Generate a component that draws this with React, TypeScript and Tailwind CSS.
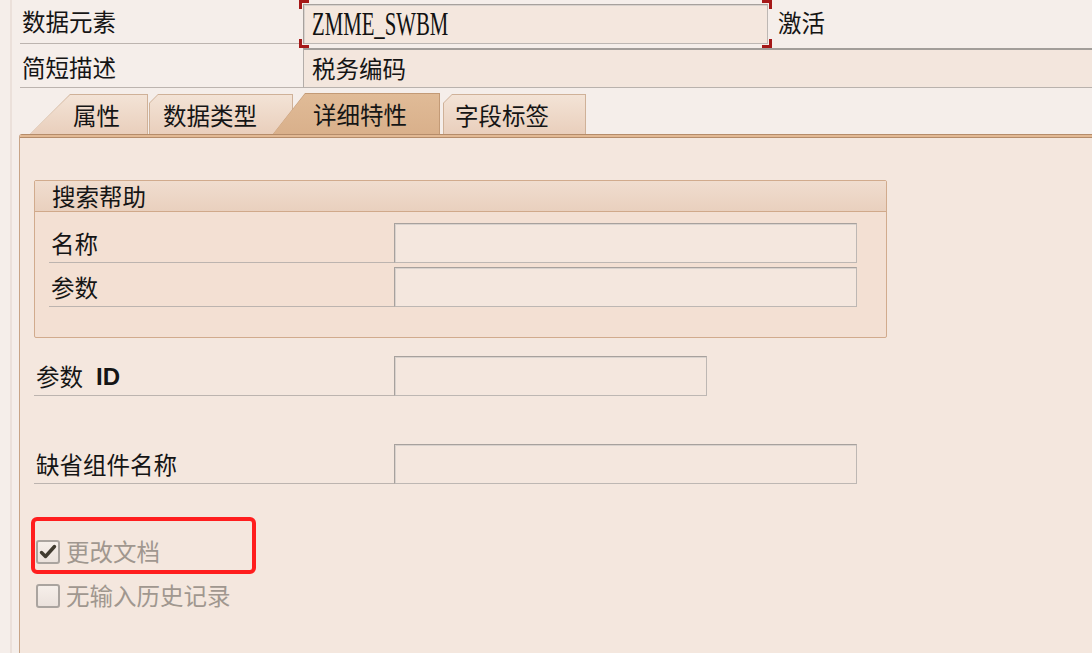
import React from 'react';

const cjk = "font-['Noto_Sans_CJK_SC','Noto_Sans_CJK_SC',sans-serif]";

function Field({ w, text }: { w: string; text?: string }) {
  return (
    <div
      className={`${w} h-[40px] flex items-center pl-[8px] bg-[#f4e7de] border border-[#a7a19d] border-b-[#bdb7b3] border-r-[#bdb7b3] shadow-[inset_1px_1px_0_#d9d2cd]`}
    >
      {text}
    </div>
  );
}

function LabelRow({
  label,
  labelW,
  fieldW,
  bold,
}: {
  label: string;
  labelW: string;
  fieldW: string;
  bold?: string;
}) {
  return (
    <div className="flex items-end h-[40px]">
      <div className={`${labelW} h-[40px] flex items-center border-b border-[#bcb4af] pl-[2px] pt-[2px]`}>
        {label}
        {bold && (
          <span className="ml-[13px] font-['Liberation_Sans',sans-serif] font-bold text-[24px]">{bold}</span>
        )}
      </div>
      <Field w={fieldW} />
    </div>
  );
}

function Checkbox({ checked, label }: { checked?: boolean; label: string }) {
  return (
    <div className="flex items-center h-[24px]">
      <div className="w-[24px] h-[24px] rounded-[3px] border-2 border-[#aaa49f] bg-gradient-to-b from-[#f6efea] to-[#ebe2dc] flex items-center justify-center">
        {checked && (
          <svg width="18" height="16" viewBox="0 0 18 16">
            <path d="M2.5 8.5 L6.5 12.5 L15.5 2.5" fill="none" stroke="#403b30" strokeWidth="3.4" strokeLinecap="round" strokeLinejoin="round" />
          </svg>
        )}
      </div>
      <span className="ml-[6px] text-[#a0978f]">{label}</span>
    </div>
  );
}

export default function App() {
  return (
    <div className={`relative w-[1092px] h-[653px] overflow-hidden bg-[#f5eeea] text-[23.5px] leading-none text-[#151515] ${cjk}`}>
      <div className="flex h-full">
        {/* left strip */}
        <div className="w-[12px] shrink-0 border-r-2 border-[#ebe0da]" />

        <div className="flex-1 flex flex-col">
          {/* Row 1 */}
          <div className="flex h-[44px]">
            <div className="ml-[8px] w-[280px] border-b border-[#bcb4af] flex items-center pl-[2px]">数据元素</div>
            <div className="relative ml-[3px] mt-[4px] w-[465px] h-[40px]">
              <div className="w-full h-full flex items-center pl-[8px] bg-[#f4e7de] border border-[#a7a19d] border-b-[#bdb7b3] border-r-[#bdb7b3] shadow-[inset_1px_1px_0_#d9d2cd] overflow-hidden">
                <span className="inline-block origin-left scale-x-[0.63] font-['Liberation_Serif',serif] text-[33px] text-[#111]">
                  ZMME_SWBM
                </span>
              </div>
              <span className="absolute -left-[4px] -top-[4px] w-[10px] h-[9px] border-l-[3px] border-t-[3px] border-[#a51818]" />
              <span className="absolute -right-[4px] -top-[4px] w-[10px] h-[9px] border-r-[3px] border-t-[3px] border-[#a51818]" />
              <span className="absolute -left-[4px] -bottom-[4px] w-[10px] h-[9px] border-l-[3px] border-b-[3px] border-[#a51818]" />
              <span className="absolute -right-[4px] -bottom-[4px] w-[10px] h-[9px] border-r-[3px] border-b-[3px] border-[#a51818]" />
            </div>
            <div className="ml-[10px] flex items-center pt-[2px]">激活</div>
          </div>

          {/* Row 2 */}
          <div className="flex h-[44px]">
            <div className="ml-[8px] w-[283px] border-b border-[#bcb4af] flex items-center pl-[2px] pt-[4px]">简短描述</div>
            <div className="flex-1 mt-[4px] bg-[#f3e6dd] border-t-2 border-t-[#a29d99] border-l border-l-[#b3ada9] border-b border-b-[#b9b2ad] flex items-center pl-[8px]">
              税务编码
            </div>
          </div>

          {/* Tabs */}
          <div className="flex h-[40px] mt-[6px] ml-[18px] items-end">
            <div className="w-[118px] h-[40px] bg-[#cfb198] [clip-path:polygon(0_100%,40px_0,100%_0,100%_100%)] pt-px pr-px">
              <div className="w-full h-full bg-gradient-to-b from-[#f3e3d6] to-[#e9cfbc] [clip-path:polygon(0_100%,40px_0,100%_0,100%_100%)] flex items-center pl-[43px] pt-[2px]">
                属性
              </div>
            </div>
            <div className="ml-px w-[144px] h-[40px] bg-[#cfb198] [clip-path:polygon(0_100%,0_9px,9px_0,100%_0,100%_100%)] p-px pb-0">
              <div className="w-full h-full bg-gradient-to-b from-[#f3e3d6] to-[#e9cfbc] [clip-path:polygon(0_100%,0_8px,8px_0,100%_0,100%_100%)] flex items-center pl-[13px] pt-[2px]">
                数据类型
              </div>
            </div>
            <div className="relative z-10 -ml-[20px] w-[167px] h-[41px] bg-[#c39a76] [clip-path:polygon(0_100%,32px_0,100%_0,100%_100%)] pt-px pr-px">
              <div className="w-full h-full bg-gradient-to-b from-[#e0bb97] to-[#d9b08b] [clip-path:polygon(0_100%,32px_0,100%_0,100%_100%)] flex items-center pl-[40px] pt-[1px]">
                详细特性
              </div>
            </div>
            <div className="ml-[3px] w-[143px] h-[40px] bg-[#cfb198] [clip-path:polygon(0_100%,0_9px,9px_0,100%_0,100%_100%)] p-px pb-0">
              <div className="w-full h-full bg-gradient-to-b from-[#f3e3d6] to-[#e9cfbc] [clip-path:polygon(0_100%,0_8px,8px_0,100%_0,100%_100%)] flex items-center pl-[11px] pt-[2px]">
                字段标签
              </div>
            </div>
          </div>

          {/* Panel */}
          <div className="ml-[7px] flex-1 flex flex-col bg-[#f4e7de] border-l border-[#c8a487] rounded-tl-[3px] overflow-hidden">
            <div className="h-[4px] border-t border-b border-[#b58c6a] bg-[#e2b994]" />

            <div className="flex flex-col pl-[14px]">
              {/* Search help group */}
              <div className="mt-[42px] w-[853px] h-[158px] border border-[#d1ab8d] rounded-[2px] bg-[#f3e0d3]">
                <div className="h-[31px] bg-gradient-to-b from-[#f0ddcf] to-[#e9d0be] border-b border-[#d0a98a] flex items-center pl-[17px] pt-[2px]">
                  搜索帮助
                </div>
                <div className="ml-[14px] mt-[11px] flex flex-col gap-[4px]">
                  <LabelRow label="名称" labelW="w-[345px]" fieldW="w-[463px]" />
                  <LabelRow label="参数" labelW="w-[345px]" fieldW="w-[463px]" />
                </div>
              </div>

              <div className="mt-[18px]">
                <LabelRow label="参数" bold="ID" labelW="w-[360px]" fieldW="w-[313px]" />
              </div>
              <div className="mt-[48px]">
                <LabelRow label="缺省组件名称" labelW="w-[360px]" fieldW="w-[463px]" />
              </div>

              <div className="mt-[56px] ml-[2px] flex flex-col gap-[20px]">
                <Checkbox checked label="更改文档" />
                <Checkbox label="无输入历史记录" />
              </div>
            </div>
          </div>
        </div>
      </div>

      {/* red annotation */}
      <div className="absolute left-[31px] top-[517px] w-[225px] h-[57px] border-4 border-[#ff1e1e] rounded-[6px]" />
    </div>
  );
}
